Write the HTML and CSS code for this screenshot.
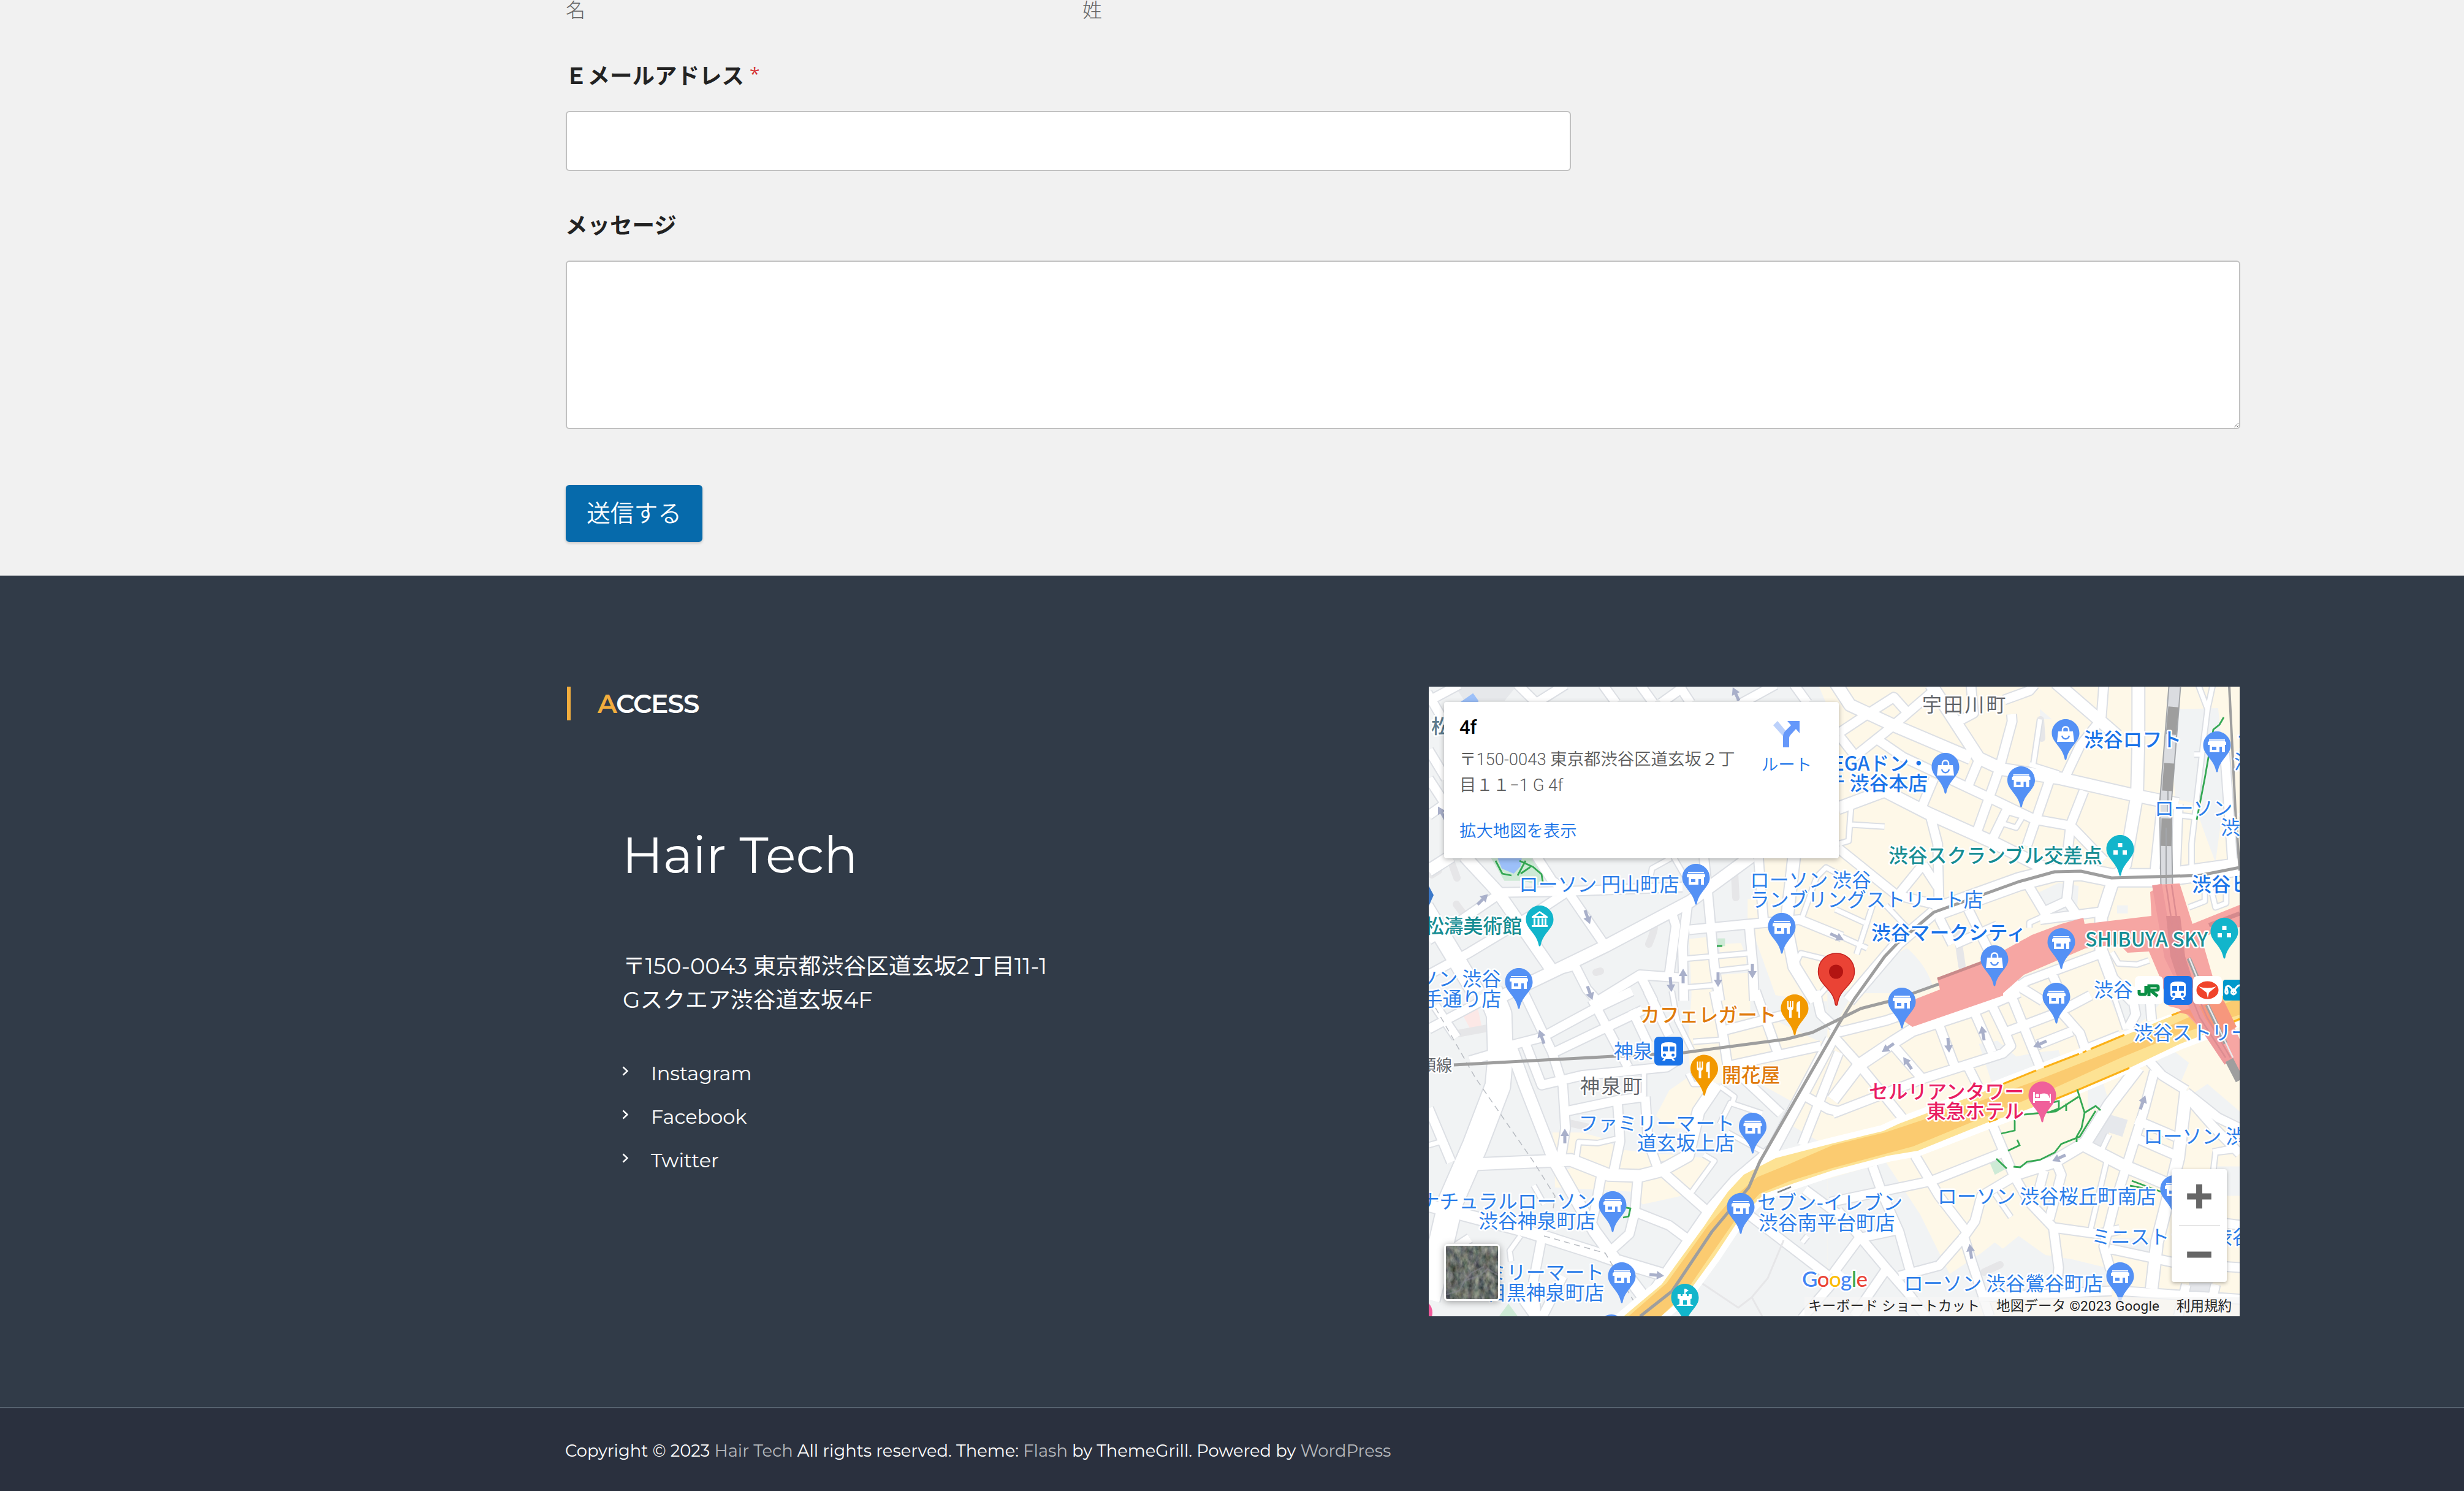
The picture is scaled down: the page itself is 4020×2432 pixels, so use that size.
FILE: index.html
```html
<!DOCTYPE html>
<html lang="ja">
<head>
<meta charset="utf-8">
<title>Hair Tech</title>
<link rel="stylesheet" href="styles.css">
</head>
<body>
<main class="contact">
  <form class="form">
    <div class="name-row"><span class="sublabel">名</span><span class="sublabel">姓</span></div>
    <label class="label label-email">Ｅメールアドレス<span class="required">*</span></label>
    <input class="field" type="text">
    <label class="label label-message">メッセージ</label>
    <textarea class="field area"></textarea>
    <button class="submit" type="button">送信する</button>
  </form>
</main>
<footer class="footer">
  <div class="widgets">
    <section class="access">
      <h3 class="widget-title"><span class="accent">A</span>CCESS</h3>
      <div class="access-body">
        <h1 class="salon">Hair Tech</h1>
        <p class="address"><span>〒150-0043 東京都渋谷区道玄坂2丁目11-1</span><span>Gスクエア渋谷道玄坂4F</span></p>
        <ul class="links">
          <li><svg class="chev" viewBox="0 0 10 16"><path d="M1.500 1.500L8.500 8L1.500 14.500"/></svg><a>Instagram</a></li>
          <li><svg class="chev" viewBox="0 0 10 16"><path d="M1.500 1.500L8.500 8L1.500 14.500"/></svg><a>Facebook</a></li>
          <li><svg class="chev" viewBox="0 0 10 16"><path d="M1.500 1.500L8.500 8L1.500 14.500"/></svg><a>Twitter</a></li>
        </ul>
      </div>
    </section>
    <div class="map">
      <svg class="canvas" width="1323" height="1027" viewBox="0 0 1323 1027">
        <defs>
          <g id="roads">
            <g transform="translate(-11 -10) scale(.4337 .3333)">
              <path class="r m" d="M20 60L100 240M25 100L140 20M360 20L430 110M430 110L540 20M680 20L730 110M820 20L870 110M900 110L975 40V20M975 40L1010 110M1190 120L1330 20M1400 20L1450 110M25 340L90 480M25 480L85 600M25 660L90 600"/>
              <path class="r l" d="M25 930L110 860M160 860L285 1035L490 1420M300 1545L500 1420L690 1300L1010 1080L1240 860M1400 860L1370 1200L1400 1400L1480 1568"/>
              <path class="r m" d="M430 860L490 980L550 1035L690 1300M285 1037L540 1032L980 1010M545 1035L410 1150L180 1330L25 1440M285 1050L150 1170L25 1270M1000 1085L980 1300L985 1568M938 1130L955 1200L930 1440M1060 860L1075 1040L1100 1400L1120 1568M1005 1220L1230 1192L1420 1170L1580 1255M1230 1190L1245 1400L1250 1568M1265 860L1285 1180M500 1420L575 1395L620 1510L660 1568M660 1568L820 1440L980 1455M820 1440L870 1568"/>
              <path class="r s" d="M860 960L865 920L935 870M945 860L985 950L1010 1000M1570 950L1520 915L1485 960L1430 1160M985 1362L1245 1333M1100 1422L1235 1402M985 1503L1110 1490M1400 1400L1425 1335L1568 1380M1480 1560L1580 1420"/>
              <path class="r xl" d="M10 1110L205 1530"/>
            </g>
            <g transform="translate(659 -10) scale(.4337 .3333)">
              <path class="r l" d="M10 10L65 120L230 220L520 380M370 20L430 140L550 380L640 435L860 480L1130 560L1300 605M20 625L195 540L360 650L600 790L800 920M840 10L1000 190L1070 270M1150 20V300L1145 560L1100 900L1050 1000L1010 1160L1010 1320L1050 1460L1130 1568M60 1568L245 1285L380 1135"/>
              <path class="r xl" d="M380 1135L700 985L835 940L935 935L1050 965L1240 965L1568 905"/>
              <path class="r m" d="M20 260L130 165L230 82L280 155M80 375L210 240L380 50M25 270L85 370M465 205L530 160L520 20M645 95L740 50L760 20M170 290L265 375L600 580L760 680L890 710M673 165L675 200L625 440L540 750M550 390L510 515M380 480L335 620M365 650L395 800L400 1100M660 620L600 780M815 490L730 810M945 540L895 705L882 860M895 710L1020 880M1020 20L1010 190L930 320L872 480M1240 590L1212 930M1300 605L1290 930M20 820L240 1050L400 1100M340 900L240 1060M340 900L395 1010M735 1000L815 1175M890 955L880 1075L920 1150M780 1140L880 1080M510 1120L590 1330M400 1160L450 1290M460 1290L620 1200M650 1540L730 1470L1000 1340M820 1420L870 1568M680 1480L790 1568M1475 350L1505 900M780 1170L1020 1130"/>
              <path class="r s" d="M70 600L60 785L20 800M70 705L195 715M650 640L715 665L690 720L640 700M780 190L755 410M740 410L850 455M200 1100L280 1210M150 1100L90 1340M10 1120L120 1185M10 1240L130 1310M740 1210L740 1185L800 1150M1375 20L1410 140L1395 300L1350 800L1350 910M1430 20L1410 140M1360 362L1395 362M1310 660L1370 670M1340 1110L1400 1080V1020M1420 1000L1440 1110L1480 1090V1020M1050 1330L1075 1385L1145 1390L1190 1370"/>
            </g>
            <g transform="translate(-11 500) scale(.4337 .3444)">
              <path class="r xxl" d="M255 -10L290 100L295 300L285 440L200 720L110 980L60 1250L20 1450"/>
              <path class="r l" d="M330 240L385 430L500 800L650 1130L720 1250L840 1450M200 810L560 790L700 860L820 865L900 840L1000 770L1040 560L1110 430M1540 220L1320 740L1180 890L1090 1020L860 1440M10 1000L400 1130L650 1230L740 1270L900 1330"/>
              <path class="r m" d="M340 245L450 210L640 80L790 -10M640 30L775 350M490 285L830 80M380 -10L490 280L530 440L540 640L520 800M390 240L450 435L600 390L920 350L970 310M540 560L735 508L840 490M735 510L745 700L720 850M840 490L850 700L890 840M790 80L850 240M850 -10L930 200M1100 -10L1130 180L1150 345L1500 250M1140 175L1370 100M1255 -10L1340 290M1160 345L1350 570M1568 280L1430 720M1430 480L1530 550L1568 560M900 840L1080 1040M675 860L655 1000L640 1080M812 870L800 1040L780 1140L710 1220M800 1035L930 1100L1010 1175M450 1160L420 1360L430 1540M340 1380L430 1540M530 1340L450 1540M25 545L60 650L110 800M25 170L250 20M50 60L130 210M180 320L260 290M1230 1050L1530 1340M1580 1320L1430 1540M1440 930L1580 1060M1480 -10L1500 100L1568 180M180 1160L70 1250"/>
              <path class="r s" d="M940 -10L960 130L1015 270M1020 230L1130 220M835 380V490M1010 950L1100 795L1060 765M1120 620L1160 520L1280 570M1150 660L1280 750M1000 380L1020 430H1070M1120 440L1175 490L1165 530M580 790L590 705L660 710L730 690M420 910L460 1000M370 1150L330 1220L335 1270M25 720L80 700M1450 1150L1430 1180"/>
            </g>
            <g transform="translate(659 500) scale(.4337 .3444)">
              <path class="r l" d="M680 860L830 800L950 710L1040 530L1150 350M930 710L1100 820L1280 915M1330 460L1300 780L1220 1180L1200 1400M0 505L100 340L230 230L300 175L530 80L700 -10"/>
              <path class="r m" d="M-10 195L200 130L270 100M0 200L100 340L275 610M230 250L340 410M400 150L460 350M530 80L600 280M510 350L550 450M0 570L340 405L640 285L670 250L650 190L600 60M640 190L850 90L970 10M665 -10L790 380M860 90L930 190L960 300M770 245L900 180M310 770L400 960L510 1140M150 820L190 960L250 1130L290 1310M-10 990L370 890L650 750M600 620L680 860L740 990L830 1110L850 1300L840 1440M680 870L560 960L535 1080L490 1160L400 1290L250 1340M490 1140L520 1260L590 1530M795 840L770 960M840 800L860 860L815 1070M830 1110L1000 1140L1080 1120M1210 370L1170 560L1060 1000L1020 1200L1045 1310M1190 320L1240 390L1330 460M1330 470L1450 590L1531 640M1140 600L1290 680M1130 680L1285 765M1040 1210L1300 1280L1540 1300M1080 1410L1540 1450M1440 1380L1420 1500M1330 1380L1300 1530M0 1330L100 1160L250 1120M20 1030L200 1300L290 1430L350 1530M200 1310L80 1530M1340 500L1430 630L1531 760M550 1440L1050 1410M1290 1060L1540 1100M1120 -30L1140 100L1110 170M1190 -20L1200 130"/>
              <path class="r s" d="M610 950L670 1060M1040 670L1010 750M1030 800L970 1120M1430 860L1440 755L1510 745M1430 750L1510 730M1060 20L1100 170M960 250L1080 190M1130 350L1350 225"/>
            </g>
          </g>
          <path id="pin" d="M0 0C10 0 22.500 8 22.500 23C22.500 38 5 45 1.500 65C1 67-1 67-1.500 65C-5 45-22.500 38-22.500 23C-22.500 8-10 0 0 0Z"/>
          <g id="shop"><use href="#pin" fill="#5491f5"/><path fill="#fff" d="M-13 13H13V15H-13ZM-15 18L-13 16H13L15 18V22H13V34H8V25H4V34H-12V22H-15Z"/><path fill="#5491f5" d="M-8 25H-1V30H-8Z"/></g>
          <g id="bag"><use href="#pin" fill="#5491f5"/><path fill="#fff" d="M-12 20H12L14 37H-14Z"/><path fill="none" stroke="#fff" stroke-width="2.500" d="M-5 21V17C-5 11 5 11 5 17V21"/><path fill="none" stroke="#5491f5" stroke-width="2.500" d="M-6 27C-4 34 4 34 6 27"/></g>
          <g id="food"><use href="#pin" fill="#f29900"/><path fill="#fff" d="M-12 11H-10V21H-8V11H-6V21H-4V11H-2V22Q-3 26-5 26V38H-9V26Q-12 25-12 22ZM3 18Q3 11 9 11V38H6V28H3Z"/></g>
          <g id="dots"><use href="#pin" fill="#12b5cb"/><path fill="#fff" d="M-3.500 13H3.500V20H-3.500ZM-11 25H-4V32H-11ZM4 25H11V32H4Z"/></g>
          <g id="arrow"><path fill="#a9b0ca" d="M0-12L7 0H2.500V12H-2.500V0H-7Z"/></g>
          <g id="train"><rect width="47" height="47" rx="7" fill="#1a73e8"/><path fill="#fff" d="M11 14Q11 9 23.500 9T36 14V30Q36 35 31 35L34 39H30L28 36H19L17 39H13L16 35Q11 35 11 30Z"/><path fill="#1a73e8" d="M14 16H22V24H14ZM25 16H33V24H25Z"/><circle cx="16.500" cy="30" r="2.500" fill="#1a73e8"/><circle cx="30.500" cy="30" r="2.500" fill="#1a73e8"/></g>
        </defs>
        <rect width="1323" height="1027" fill="#f1f3f4"/>
        <g class="land" transform="translate(-11 -10) scale(.4337 .3333)">
          <path d="M1490 20H1570V110H1520ZM1285 860H1570V1570H1480L1330 1540L1250 1250L1225 1180V1070L1290 1060ZM1005 1265L1080 1255L1090 1570H1015ZM1120 1290L1200 1285L1210 1320L1120 1330ZM1115 1360L1220 1350V1390L1120 1405ZM1120 1440L1230 1430V1570H1135Z"/>
          <path fill="#e6e8eb" d="M120 20H360L310 100H160Z"/>
          <path fill="#9cc0f9" d="M145 105L192 62L212 98V105Z"/>
          <path fill="#ceead6" d="M260 870H430L455 960L450 1005L380 980H310Z"/>
          <path fill="#9cc0f9" d="M285 870H375L370 910L345 945L300 920Z"/>
          <path fill="#ceead6" d="M1112 1262H1140V1300H1112Z"/>
        </g>
        <g class="land" transform="translate(659 -10) scale(.4337 .3333)">
          <path d="M-20 20H1540V1570H-20Z"/>
          <path class="gray" d="M1255 90L1310 140L1450 135L1480 500L1440 890L1400 750L1360 600L1290 580ZM280 1310Q350 1390 375 1490L250 1570H60L250 1330ZM780 140L825 190H780ZM770 1040L850 990L925 1005L920 1110L810 1150ZM810 1140L880 1120L900 1160L820 1185ZM1070 1100H1110V1140H1070Z"/>
        </g>
        <g class="land" transform="translate(-11 500) scale(.4337 .3444)">
          <path d="M1015 -10H1235V130L1330 130L1480 220L1568 245V700H1490L1395 630L1430 540L1230 400L1100 430L1040 530L1000 640L930 640L880 580L930 460L1010 390L1000 250ZM490 660H600L690 690L740 740L880 760L1000 770L1110 790L1010 950L940 970L830 1000L790 940L500 920V850L560 830L510 780Z"/>
          <path fill="#fce8e6" d="M145 85L210 72L225 160L182 170Z"/>
          <path fill="#ceead6" d="M290 1530L325 1470L360 1530Z"/>
        </g>
        <g class="land" transform="translate(659 500) scale(.4337 .3444)">
          <path d="M-20 0H1540V1540H-20Z"/>
          <path class="gray" d="M-20 880L200 800L330 1050L440 1330L560 1230L610 1180L640 1210L700 1150L800 1240L900 1260L1030 1300V1400L580 1440L400 1540H-20ZM550 240L620 225L690 300L770 280L850 270L860 310L760 360L600 430ZM960 440L1010 390L1040 520L960 560ZM1280 270L1340 330L1310 420L1200 340ZM1350 480L1410 430L1531 560V700ZM1050 1160L1230 1160V1220L1050 1230ZM-20 -10L80 -10L20 130L-20 140ZM1040 20L1250 20L1190 110L1100 190ZM1440 820H1540V960H1430Z"/>
          <path fill="#e6e8ec" d="M1030 570L1110 600L1090 680L1040 660L1010 740L960 720ZM1340 1370H1430L1410 1440H1340Z"/>
          <path fill="#ceead6" d="M590 800L625 785L655 830L610 860Z"/>
        </g>
        <g fill="none" stroke="#e6e6e8" stroke-linecap="round" stroke-width="12">
          <path d="M5 307L16 300M37 287L46 312M45 355L56 370M359 420Q372 390 366 387M499 305L501 344M47 566L96 557M273 466L280 464M862 402L870 456M998 54L1000 84M380 780L393 778M906 955L932 943M230 712L262 719"/>
        </g>
        <use href="#roads" class="casing"/>
        <use href="#roads" class="paving"/>
        <g fill="none" stroke="#b9bdc3" stroke-width="1.500" stroke-dasharray="10 7"><path d="M11 524L76 638L171 775L206 831L202 858M188 896L288 924L345 1020"/></g>
        <g fill="none" stroke="#e6e6e8" stroke-width="3"><path d="M579 903L553 965L527 996L544 1027M444 972L505 1013L527 996"/></g>

        <path d="M318 1027L380 975L450 879L466 855L488 824L514 796L566 769L659 745L741 725L767 713L902 662L993 627L1145 569L1275 521L1330 498V542L1223 583L1140 620L1023 670L928 706L798 756L750 765L659 789L596 810L548 827L509 865L466 930L423 989L379 1027Z" fill="none" stroke="#fff" stroke-width="20"/>
        <path d="M318 1027L380 975L450 879L466 855L488 824L514 796L566 769L659 745L741 725L767 713L902 662L993 625L1069 596L1135 569L1225 532L1330 490V542L1271 565L1225 583L1143 622L1061 657L968 693L914 710L798 757L750 765L659 789L596 810L548 827L509 865L466 930L423 989L379 1027Z" fill="#fde293"/>
        <path d="M326 1027L388 973L455 880L494 836L536 800L585 780L659 748L745 727L902 675L993 642L1140 584L1245 537L1330 505V533L1220 568L1130 605L1020 655L928 693L790 750L659 785L590 806L540 827L502 867L455 935L418 989L379 1027Z" fill="#fbcb70"/>
        <path d="M937 648L991 626M1004 621L1061 599M1067 597L1073 594M1080 591L1135 568M1212 536L1240 525M1300 552L1323 542M914 710L928 705M1022 673L1061 657L1143 622" fill="none" stroke="#fbb117" stroke-width="3"/>

        <g fill="none">
          <path d="M1217 0L1202 190L1204 330" stroke="#a3a6aa" stroke-width="21"/>
          <path d="M1217 0L1202 190L1204 330" stroke="#dadce0" stroke-width="17"/>
          <path d="M1215 33L1211 78M1208 125L1205 170M1204 215L1203 260" stroke="#9e9e9e" stroke-width="17"/>
          <path d="M1203 230V330M1206 170V205" stroke="#a3a6aa" stroke-width="2"/>
          <path d="M1306 0L1316 200L1323 300" stroke="#9e9e9e" stroke-width="4"/>
        </g>
        <g fill="none" stroke="#9e9e9e" stroke-width="5" stroke-linejoin="round">
          <path d="M41 617L301 603L416 597L583 575L626 564L705 525L760 511L902 460"/>
          <path d="M345 1027L397 986L462 889L522 817L540 775L669 550L694 510L744 440L765 418L824 368L963 318L1021 302L1064 301L1114 312L1257 308L1323 295"/>
        </g>
        <path d="M569 825L591 816" stroke="#80868b" stroke-width="2.500"/>
        <g fill="#f6a6a3">
          <path d="M830 477L902 450L984 405L1032 387L1068 377L1070 387L1179 374L1177 335L1185 330L1188 323L1225 321L1246 387L1323 356V392L1260 408L1279 473L1299 520L1323 575V640L1306 608L1237 535L1223 525L1207 521L1192 472L1175 432L1140 434L1126 420L1071 427L971 470L937 500V504L789 555L776 546L793 510L834 494Z"/>
        </g>
        <path d="M1221 531L1250 522L1297 512L1318 555L1290 570L1262 560L1240 535Z" fill="#f7977d"/>
        <path d="M1188 323L1208 440L1260 545L1305 612" fill="none" stroke="#ee9a9c" stroke-width="16"/>
        <path d="M1203 374H1226L1234 440L1250 490L1228 495L1210 440Z" fill="#dd8c90"/>
        <path d="M1203 323L1222 450L1258 540L1300 605M1212 323L1231 450L1270 540L1308 605" fill="none" stroke="#dc8c91" stroke-width="2.500"/>
        <path d="M1240 443L1253 473M1270 519L1300 582" fill="none" stroke="#a0a0a0" stroke-width="7"/>
        <path d="M1241 443L1254 475M1271 519L1312 605" fill="none" stroke="#e8eaed" stroke-width="2.500"/>
        <path d="M1306 609L1323 642" stroke="#9e9e9e" stroke-width="14"/>
        <path d="M1273 389L1323 370" stroke="#d58a8d" stroke-width="7"/>
        <path d="M830 477L902 450" stroke="#c98a8a" stroke-width="5"/>

        <g fill="none" stroke="#34a853" stroke-width="2.800">
          <path d="M1297 50L1290 62L1280 70L1266 150L1253 217"/>
          <path d="M1058 657L1070 695L1065 720L1057 734V743M1070 695L1088 684L1096 691M1088 692L1062 734L1032 746L1021 760L997 772L976 775L965 784L954 783M971 698L1023 693L1060 669M1012 679L1028 676V688L1010 695M1040 680V692M956 707V724L934 729M960 739L964 748L945 757M926 770L943 786M1147 806L1195 824M1144 814L1165 818"/>
          <path d="M109 284L120 305L135 308M145 308L158 284M148 284L170 294L184 306L186 318M150 305L166 294M470 423H479M318 849L329 851L326 864L317 866"/>
        </g>
        <g>
          <use href="#arrow" transform="translate(501 12) rotate(-25)"/><use href="#arrow" transform="translate(88 347) rotate(45)"/><use href="#arrow" transform="translate(259 376) rotate(160)"/><use href="#arrow" transform="translate(21 206) rotate(-30)"/><use href="#arrow" transform="translate(415 472)"/><use href="#arrow" transform="translate(395 486) rotate(175)"/><use href="#arrow" transform="translate(472 478) rotate(180)"/><use href="#arrow" transform="translate(528 464) rotate(180)"/><use href="#arrow" transform="translate(263 500) rotate(160)"/><use href="#arrow" transform="translate(184 571) rotate(-20)"/><use href="#arrow" transform="translate(222 733)"/><use href="#arrow" transform="translate(372 960) rotate(95)"/><use href="#arrow" transform="translate(666 408) rotate(115)"/>
          <use href="#arrow" transform="translate(749 589) rotate(-125)"/><use href="#arrow" transform="translate(848 585) rotate(175)"/><use href="#arrow" transform="translate(904 565) rotate(-10)"/><use href="#arrow" transform="translate(997 583) rotate(-115)"/><use href="#arrow" transform="translate(781 614) rotate(-35)"/><use href="#arrow" transform="translate(1165 678) rotate(20)"/><use href="#arrow" transform="translate(1028 769) rotate(-115)"/><use href="#arrow" transform="translate(884 921) rotate(-8)"/>
        </g>

        <path d="M0 325L8 340L0 358Z" fill="#3b78c9"/>
        <circle cx="-16" cy="1021" r="22" fill="#f0599a"/>
        <use href="#shop" x="436" y="289"/><use href="#shop" x="576" y="369"/><use href="#shop" x="147" y="459"/><use href="#shop" x="966.500" y="130"/><use href="#shop" x="1286" y="73"/><use href="#shop" x="1032" y="394"/><use href="#shop" x="1024" y="483"/><use href="#shop" x="772" y="491"/><use href="#shop" x="528.500" y="695"/><use href="#shop" x="300" y="823"/><use href="#shop" x="509" y="826"/><use href="#shop" x="315" y="939"/><use href="#shop" x="298" y="1024"/><use href="#shop" x="1216" y="797"/><use href="#shop" x="1128" y="939"/>
        <use href="#bag" x="1039" y="53"/><use href="#bag" x="843" y="108"/><use href="#bag" x="923" y="422"/>
        <use href="#dots" x="1128" y="242"/><use href="#dots" x="1298" y="377"/>
        <use href="#food" x="597" y="502"/><use href="#food" x="449.500" y="600.500"/>
        <g transform="translate(181 357)"><use href="#pin" fill="#12b5cb"/><path fill="#fff" d="M0 9L13 18V20H-13V18ZM-10 21H-7V32H-10ZM-3.500 21H-.5V32H-3.500ZM3 21H6V32H3ZM8 21H11V32H8ZM-13 32H13V35H-13Z"/><path d="M-6 17L0 12L6 17Z" fill="#12b5cb"/></g>
        <g transform="translate(418 974)"><use href="#pin" fill="#12b5cb"/><path fill="#fff" d="M-1 8H1L6 11L1 14V17H3V20H6V17H11V24L9 25V33L14 36H-14L-9 33V25L-12 24V17H-7V20H-4V17H-1Z"/><path d="M-3 27H3V34H-3Z" fill="#12b5cb"/></g>
        <g transform="translate(1001 644)"><use href="#pin" fill="#f0609a"/><path fill="#fff" d="M-15 17H-12V27H12V20H14V35H12V32H-12V35H-15ZM-4 21Q10 16 12 28H-4Z"/><circle cx="-8" cy="23" r="3" fill="#fff"/></g>
        <path fill="#ea4335" stroke="#c5221f" stroke-width="1.500" d="M665 435C682 435 694.500 448 694.500 465C694.500 487 670 492 667 517C666 521 664 521 663 517C660 492 635.500 487 635.500 465C635.500 448 648 435 665 435Z"/><circle cx="664.500" cy="465" r="11.500" fill="#b31412"/>
        <use href="#train" x="368" y="571"/>
        <rect x="1152" y="472" width="46" height="46" rx="7" fill="#fff"/><path d="M1159 495V500Q1159 502 1162 502H1167Q1170 502 1170 499V488M1175 505V488H1188Q1190 488 1190 490V493Q1190 495 1188 495H1177L1189 505" fill="none" stroke="#0b8f45" stroke-width="5"/>
        <use href="#train" x="1199" y="472"/>
        <rect x="1247" y="472" width="47" height="46" rx="7" fill="#fff"/><ellipse cx="1270.500" cy="495" rx="18" ry="14.500" fill="#f0432a"/><path fill="#fff" d="M1256 489Q1270 494 1285 489L1273 499L1271 508L1269 499Z"/>
        <rect x="1296" y="478" width="40" height="34" rx="4" fill="#0099cb"/><path d="M1301 488Q1305 501 1302 501Q1298 501 1301 490Q1306 484 1313 498Q1320 484 1326 488M1309 499Q1313 488 1317 499Q1313 505 1309 499" fill="none" stroke="#fff" stroke-width="3"/>

        <g class="names">
          <text class="blue" x="147" y="334">ローソン 円山町店</text>
          <text class="teal" x="152" y="402" text-anchor="end">松濤美術館</text>
          <text class="slate" x="4" y="76">松</text>
          <text class="blue" x="524" y="327">ローソン 渋谷</text><text class="blue" x="524" y="359">ランブリングストリート店</text>
          <text class="blue" x="118" y="488" text-anchor="end">ローソン 渋谷</text><text class="blue" x="118" y="521" text-anchor="end">山手通り店</text>
          <text class="town" x="805" y="41">宇田川町</text>
          <text class="blue strong" x="815" y="137" text-anchor="end">MEGAドン・</text><text class="blue strong" x="814" y="169" text-anchor="end">テ 渋谷本店</text>
          <text class="blue strong" x="1069" y="98">渋谷ロフト</text>
          <text class="blue" x="1184" y="210">ローソン ノ</text><text class="blue" x="1292" y="241">渋谷</text>
          <text class="blue" x="1317" y="103">フ</text><text class="blue" x="1314" y="134">渋</text>
          <text class="teal" x="750" y="287">渋谷スクランブル交差点</text>
          <text class="blue strong" x="722" y="413">渋谷マークシティ</text>
          <text class="teal" x="1071" y="424" textLength="200">SHIBUYA SKY</text>
          <text class="blue strong" x="1245" y="334">渋谷ヒ</text>
          <text class="blue" x="1085" y="506">渋谷</text>
          <text class="blue" x="1150" y="576">渋谷ストリー</text>
          <text class="orange" x="345" y="547">カフェレガート</text><text class="orange" x="478" y="645">開花屋</text>
          <text class="blue" x="302" y="606">神泉</text><text class="town" x="247" y="663">神泉町</text>
          <text class="line" x="38" y="627" text-anchor="end">頭線</text>
          <text class="blue" x="499" y="724" text-anchor="end">ファミリーマート</text><text class="blue" x="499" y="756" text-anchor="end">道玄坂上店</text>
          <text class="blue" x="272" y="851" text-anchor="end">ナチュラルローソン</text><text class="blue" x="272" y="883" text-anchor="end">渋谷神泉町店</text>
          <text class="blue" x="286" y="967" text-anchor="end">ミリーマート</text><text class="blue" x="286" y="1000" text-anchor="end">目黒神泉町店</text>
          <text class="blue" x="536" y="853" textLength="237">セブン-イレブン</text><text class="blue" x="538" y="886">渋谷南平台町店</text>
          <text class="pink" x="971" y="672" text-anchor="end">セルリアンタワー</text><text class="pink" x="971" y="704" text-anchor="end">東急ホテル</text>
          <text class="blue" x="1166" y="745">ローソン 渋</text>
          <text class="blue" x="830" y="843">ローソン 渋谷桜丘町南店</text>
          <text class="blue" x="1081" y="909">ミニストップ 渋谷</text>
          <text class="blue" x="775" y="985">ローソン 渋谷鶯谷町店</text>
          <text class="google" x="609" y="979" textLength="107"><tspan fill="#4285f4">G</tspan><tspan fill="#ea4335">o</tspan><tspan fill="#fbbc04">o</tspan><tspan fill="#4285f4">g</tspan><tspan fill="#34a853">l</tspan><tspan fill="#ea4335">e</tspan></text>
        </g>
        <path d="M613 996H1323V1027H613Z" fill="#f5f5f5" fill-opacity=".75"/>
        <g class="credits"><text x="619" y="1018" textLength="280">キーボード ショートカット</text><text x="926" y="1018" textLength="266">地図データ ©2023 Google</text><text x="1220" y="1018" textLength="90">利用規約</text></g>
      </svg>
      <div class="card">
        <div class="place">
          <strong class="place-name">4f</strong>
          <div class="place-addr">〒150-0043 東京都渋谷区道玄坂２丁<br>目１１−1 G 4f</div>
          <a class="bigger">拡大地図を表示</a>
        </div>
        <div class="route">
          <svg width="44" height="44" viewBox="0 0 44 44"><path d="M0 8L7 1L22 19L17 27Z" fill="#bcd1fb"/><path d="M16 44V27Q16 21 20 17L29 8L23 1H43V21L37 14L28 24Q26 26 26 30V44Z" fill="#6698fa"/></svg>
          <span>ルート</span>
        </div>
      </div>
      <svg class="thumb" viewBox="0 0 85 87">
        <defs><filter id="trees" x="0" y="0" width="100%" height="100%"><feTurbulence type="fractalNoise" baseFrequency=".11 .07" numOctaves="4" seed="7"/><feColorMatrix values=".5 .3 0 0 -.08  .42 .38 0 0 -.07  .38 .3 .12 0 -.08  0 0 0 0 1"/><feComponentTransfer><feFuncR type="gamma" exponent="1.700"/><feFuncG type="gamma" exponent="1.650"/><feFuncB type="gamma" exponent="1.700"/></feComponentTransfer></filter></defs>
        <rect width="85" height="87" fill="#55594f"/><rect width="85" height="87" filter="url(#trees)"/>
        <path d="M0 80L22 73L30 57L52 50L68 38L85 48M30 57L42 44L62 34" fill="none" stroke="#85858f" stroke-opacity=".5" stroke-width="2.500"/>
      </svg>
      <div class="zoom">
        <svg viewBox="0 0 90 92"><path d="M25 40H65V50H25ZM40 25H50V65H40Z" fill="#666"/></svg>
        <hr>
        <svg viewBox="0 0 90 92"><path d="M25 42H65V52H25Z" fill="#666"/></svg>
      </div>
    </div>
  </div>
  <div class="bottom"><p class="copy">Copyright © 2023 <a>Hair Tech</a> All rights reserved. Theme: <a>Flash</a> by ThemeGrill. Powered by <a>WordPress</a></p></div>
</footer>
</body>
</html>
```
FILE: styles.css
```css
* { box-sizing: border-box; }
body {
  margin: 0;
  width: 4020px;
  height: 2432px;
  overflow: hidden;
  display: flex;
  flex-direction: column;
  background: #f1f1f1;
  font-family: Montserrat, "Noto Sans CJK JP", sans-serif;
}
h1, h3, p, ul { margin: 0; padding: 0; font-weight: 400; }

.contact { height: 939px; flex: none; padding-left: 923px; border-bottom: 1px solid #d5d7d9; }
.form { display: flex; flex-direction: column; align-items: flex-start; font-family: "Noto Sans CJK JP", sans-serif; }
.name-row { display: grid; grid-template-columns: 843px 843px; height: 97px; }
.sublabel { font-size: 32px; line-height: 28px; font-weight: 300; color: #666; }
.label { font-size: 36.500px; line-height: 50px; font-weight: 700; color: #222; display: flex; }
.label-email { margin-bottom: 34px; margin-left: -1px; }
.label-message { margin: 62px 0 34px -1px; }
.required { color: #d63637; font: 400 30px/46px "Open Sans", sans-serif; margin-left: 9px; }
.field { width: 1640px; height: 98px; border: 2px solid #c1c1c1; border-radius: 6px; background: #fff; padding: 0; margin: 0; display: block; }
.area { width: 2732px; height: 275px; }
.submit {
  margin-top: 91px; width: 223px; height: 93px; border: 0; border-radius: 6px; padding: 0 0 8px;
  background: #066aab; color: #fff; font: 350 38.800px "Noto Sans CJK JP", sans-serif;
  box-shadow: 0 2px 4px rgba(0,0,0,.2);
}

.footer { flex: 1; background: #313b48; color: #fff; display: flex; flex-direction: column; }
.widgets { height: 1356px; padding: 181px 0 0 923px; display: flex; }
.access { width: 1408px; }
.widget-title { margin-left: 2px; border-left: 6px solid #f2ad3d; padding-left: 44px; height: 55px; line-height: 57px; font-size: 42.500px; font-weight: 600; letter-spacing: -1.300px; }
.accent { color: #f2ad3d; }
.access-body { padding: 170px 0 0 93px; }
.salon { font-size: 82px; line-height: 100px; font-weight: 400; margin-left: -1px; }
.address { margin-top: 103px; font-size: 36.850px; line-height: 55px; display: flex; flex-direction: column; }
.links { list-style: none; margin-top: 57px; font-size: 32px; }
.links li { display: flex; align-items: center; height: 71px; }
.chev { width: 10px; height: 16px; margin: -8px 37px 0 -1px; fill: none; stroke: #fff; stroke-width: 2.500; }

.map { position: relative; width: 1323px; height: 1027px; overflow: hidden; background: #f1f3f4; }
.canvas { display: block; }
.land { fill: #fef8e8; }
.gray { fill: #f1f3f4; }
.r { fill: none; vector-effect: non-scaling-stroke; stroke-linejoin: round; }
.casing { --edge: 4px; stroke: #dcdfe4; }
.paving { --edge: 0px; stroke: #fff; }
.s { stroke-width: calc(7px + var(--edge)); }
.m { stroke-width: calc(14px + var(--edge)); }
.l { stroke-width: calc(19px + var(--edge)); }
.xl { stroke-width: calc(28px + var(--edge)); }
.xxl { stroke-width: calc(40px + var(--edge)); }
.names text { font: 500 31.800px "Noto Sans CJK JP", sans-serif; stroke: #fff; stroke-width: 5px; stroke-linejoin: round; paint-order: stroke; }
.blue { fill: #2b7de9; }
.names .blue { font-weight: 400; }
.names .strong { font-weight: 500; fill: #1a73e8; }
.teal { fill: #168d93; }
.orange { fill: #e07b0c; }
.pink { fill: #e91e63; }
.slate { fill: #5b7a8c; }
.names .town { fill: #5f6368; font-weight: 400; letter-spacing: 3px; }
.names .line { fill: #5f6368; font-size: 26px; font-weight: 400; }
.names .google { font: 500 35px Lato, sans-serif; }
.credits { font: 400 22.500px Roboto, "Noto Sans CJK JP", sans-serif; fill: #222; }
.card {
  position: absolute; left: 25px; top: 25px; width: 644px; height: 255px; background: #fff; border-radius: 4px;
  box-shadow: 0 2px 8px rgba(0,0,0,.3); display: flex; padding: 21px 0 0 25px;
  font-family: Roboto, "Noto Sans CJK JP", sans-serif; color: #5b5b5b;
}
.place { width: 474px; display: flex; flex-direction: column; }
.place-name { font-size: 31px; line-height: 42px; font-weight: 500; color: #000; }
.place-addr { font-size: 27.400px; line-height: 42px; margin-top: 10px; white-space: nowrap; font-weight: 350; }
.bigger { color: #1a73e8; font-size: 27.400px; line-height: 42px; margin-top: 33px; font-weight: 350; }
.route { width: 120px; display: flex; flex-direction: column; align-items: center; padding-top: 9px; color: #1a73e8; font-size: 27.500px; line-height: 40px; font-weight: 350; }
.route span { margin-top: 9px; }
.thumb { position: absolute; left: 25px; top: 909px; width: 91px; height: 93px; border: 3px solid #fff; border-radius: 6px; box-shadow: 0 2px 12px rgba(0,0,0,.35); }
.zoom { position: absolute; left: 1212px; top: 787px; width: 90px; height: 184px; background: #fff; border-radius: 4px; box-shadow: 0 2px 6px rgba(0,0,0,.3); display: flex; flex-direction: column; }
.zoom svg { width: 90px; height: 91px; }
.zoom hr { width: 67px; height: 2px; border: 0; margin: 0 auto; background: #e6e6e6; }

.bottom { flex: 1; background: #2a303e; border-top: 2px solid #56626f; padding: 48px 0 0 922px; }
.copy { font-size: 27.350px; line-height: 44px; white-space: nowrap; }
.copy a { color: #b5b8bc; }
```
